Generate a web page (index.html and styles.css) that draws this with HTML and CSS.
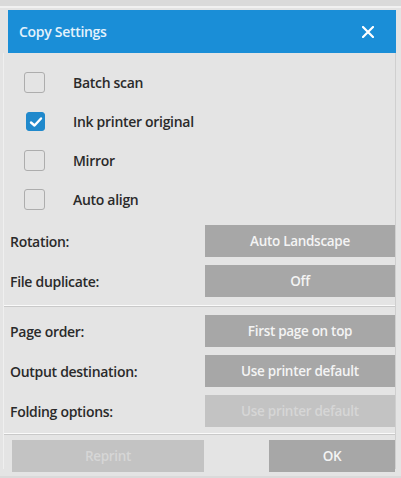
FILE: index.html
```html
<!DOCTYPE html>
<html>
<head>
<meta charset="utf-8">
<link rel="stylesheet" href="styles.css">
</head>
<body>
<div class="dialog">
  <div class="titlebar">
    <span class="title">Copy Settings</span>
    <svg class="close" width="12" height="12" viewBox="0 0 12 12"><path d="M1 1 L11 11 M11 1 L1 11" stroke="#fff" stroke-width="2.2" stroke-linecap="round"/></svg>
  </div>
  <div class="body">
    <div class="checks">
      <div class="check-row"><span class="box"></span><span class="check-label">Batch scan</span></div>
      <div class="check-row"><span class="box checked"><svg width="14" height="12" viewBox="0 0 14 12"><path d="M2 6.5 L5.5 9.5 L12 2.5" fill="none" stroke="#fff" stroke-width="2.4" stroke-linecap="round" stroke-linejoin="round"/></svg></span><span class="check-label">Ink printer original</span></div>
      <div class="check-row"><span class="box"></span><span class="check-label">Mirror</span></div>
      <div class="check-row"><span class="box"></span><span class="check-label">Auto align</span></div>
    </div>
    <div class="group first">
      <div class="opt-row"><span class="opt-label">Rotation:</span><span class="btn">Auto Landscape</span></div>
      <div class="opt-row"><span class="opt-label">File duplicate:</span><span class="btn">Off</span></div>
    </div>
    <div class="sep"></div>
    <div class="group">
      <div class="opt-row"><span class="opt-label">Page order:</span><span class="btn">First page on top</span></div>
      <div class="opt-row"><span class="opt-label">Output destination:</span><span class="btn">Use printer default</span></div>
      <div class="opt-row"><span class="opt-label">Folding options:</span><span class="btn disabled">Use printer default</span></div>
    </div>
    <div class="sep sep2"></div>
    <div class="actions">
      <span class="btn action disabled reprint">Reprint</span>
      <span class="btn action ok">OK</span>
    </div>
  </div>
</div>
</body>
</html>
```
FILE: styles.css
```css
html, body {
  margin: 0;
  padding: 0;
}
body {
  width: 401px;
  height: 478px;
  overflow: hidden;
  background: #dadada;
  font-family: "Open Sans", "Liberation Sans", sans-serif;
}
.dialog {
  margin-top: 6px;
  border-top: 2px solid #f1f1f1;
  padding-top: 2px;
  background: #e4e4e4;
  height: 470px;
  box-sizing: border-box;
}
.titlebar {
  margin: 0 5px 0 8px;
  height: 43px;
  background: #1a8ed7;
  display: flex;
  align-items: center;
  justify-content: space-between;
  padding: 0 22px 0 11px;
}
.title {
  color: #e3f2fc;
  font-size: 14px;
  font-weight: 600;
  letter-spacing: -0.3px;
}
.close {
  display: block;
}
.body {
  margin: 0 5px 0 3px;
  border-left: 1px solid #efefef;
  border-right: 1px solid #cfcfcf;
  padding-top: 10px;
  height: 416px;
  box-sizing: border-box;
}
.checks {
  display: flex;
  flex-direction: column;
}
.check-row {
  height: 39px;
  display: flex;
  align-items: center;
  padding-left: 20px;
}
.box {
  width: 21px;
  height: 21px;
  border: 1.5px solid #adadad;
  border-radius: 3px;
  box-sizing: border-box;
  display: flex;
  align-items: center;
  justify-content: center;
  flex: none;
}
.box.checked {
  width: 19px;
  height: 19px;
  margin-left: 2px;
  margin-right: 0;
  background: #2089cc;
  border-color: #2089cc;
}
.check-label {
  margin-left: 28px;
  font-size: 14px;
  font-weight: 600;
  color: #2a2a2a;
  letter-spacing: -0.3px;
}
.group {
  display: flex;
  flex-direction: column;
  gap: 8px;
}
.group.first {
  margin-top: 6px;
}
.opt-row {
  display: flex;
  align-items: center;
  justify-content: space-between;
  padding-left: 6px;
}
.opt-label {
  font-size: 14px;
  font-weight: 600;
  color: #2a2a2a;
  letter-spacing: -0.3px;
}
.btn {
  width: 190px;
  height: 32px;
  background: #a7a7a7;
  color: #f4f4f4;
  font-size: 13.5px;
  font-weight: 600;
  letter-spacing: -0.3px;
  display: flex;
  align-items: center;
  justify-content: center;
  box-sizing: border-box;
}
.btn.disabled {
  background: #c3c3c3;
  color: #d6d6d6;
}
.sep {
  margin: 8px 0;
  height: 2px;
  border-top: 1px solid #fafafa;
  border-bottom: 1px solid #c9c9c9;
  box-sizing: border-box;
}
.sep.sep2 {
  margin: 6px 0 5px;
}
.actions {
  display: flex;
  justify-content: space-between;
  padding-left: 8px;
}
.btn.action {
  height: 32px;
}
.btn.reprint {
  width: 192px;
}
.btn.ok {
  width: 126px;
}
```
